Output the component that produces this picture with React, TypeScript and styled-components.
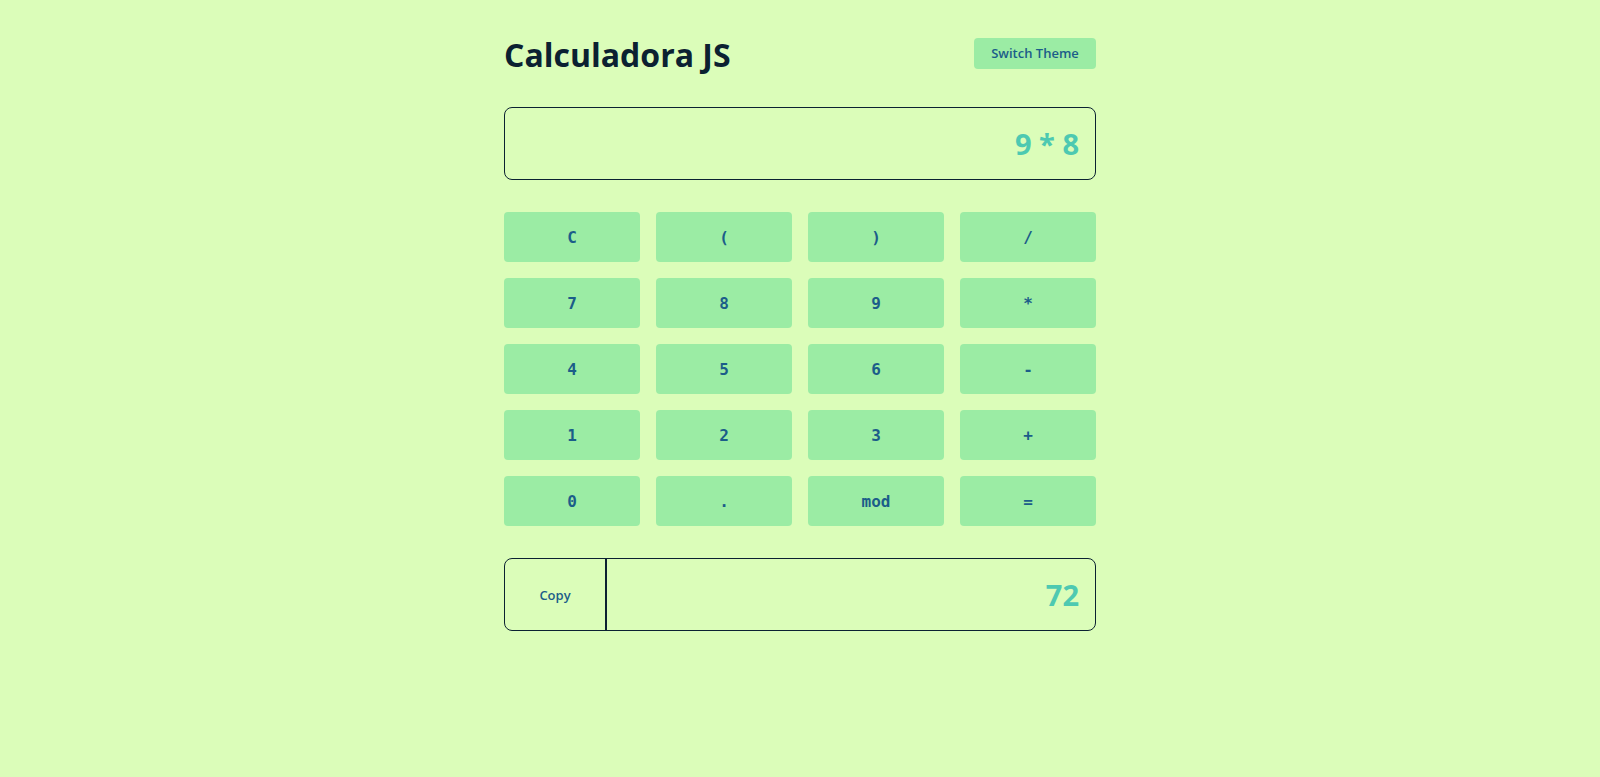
import React from "react";
import styled, { createGlobalStyle } from "styled-components";

const Global = createGlobalStyle`
  html, body { margin: 0; padding: 0; }
  body { background: #dbfdb9; font-family: "Open Sans", sans-serif; }
`;

const Page = styled.div`
  min-height: 777px;
  display: flex;
  justify-content: center;
`;

const Calc = styled.main`
  width: 592px;
  padding-top: 36px;
  display: flex;
  flex-direction: column;
`;

const Header = styled.header`
  display: flex;
  align-items: center;
  justify-content: space-between;
  height: 36px;
  margin-bottom: 35px;
`;

const Title = styled.h1`
  margin: 0;
  font-family: "Open Sans", sans-serif;
  font-weight: 700;
  font-size: 32px;
  color: #0b2131;
`;

const ThemeButton = styled.button`
  width: 122px;
  height: 31px;
  margin-top: -2px;
  border: none;
  border-radius: 4px;
  background: #9beca4;
  color: #1b5d89;
  font-family: "Open Sans", sans-serif;
  font-weight: 600;
  font-size: 13px;
  cursor: pointer;
`;

const Screen = styled.div`
  height: 73px;
  box-sizing: border-box;
  border: 1px solid #0b2131;
  border-radius: 8px;
  display: flex;
  align-items: center;
  justify-content: flex-end;
  padding: 0 16px;
  color: #4dc9b1;
  font-family: "Open Sans", sans-serif;
  font-weight: 700;
  font-size: 29px;
`;

const Keys = styled.div`
  margin: 32px 0;
  display: grid;
  grid-template-columns: repeat(4, 1fr);
  gap: 16px;
`;

const Key = styled.button`
  height: 50px;
  border: none;
  border-radius: 4px;
  background: #9beca4;
  color: #1b5d89;
  font-family: "DejaVu Sans Mono", monospace;
  font-weight: 700;
  font-size: 16px;
  cursor: pointer;
`;

const Result = styled.div`
  height: 73px;
  box-sizing: border-box;
  border: 1px solid #0b2131;
  border-radius: 8px;
  display: flex;
`;

const CopyButton = styled.button`
  width: 102px;
  border: none;
  border-right: 2px solid #0b2131;
  background: transparent;
  color: #1b5d89;
  font-family: "Open Sans", sans-serif;
  font-weight: 600;
  font-size: 13px;
  cursor: pointer;
`;

const Value = styled.div`
  flex: 1;
  display: flex;
  align-items: center;
  justify-content: flex-end;
  padding: 0 16px;
  color: #4dc9b1;
  font-family: "Open Sans", sans-serif;
  font-weight: 700;
  font-size: 29px;
`;

const keys = ["C", "(", ")", "/", "7", "8", "9", "*", "4", "5", "6", "-", "1", "2", "3", "+", "0", ".", "mod", "="];

export default function App() {
  return (
    <Page>
      <Global />
      <Calc>
        <Header>
          <Title>Calculadora JS</Title>
          <ThemeButton>Switch Theme</ThemeButton>
        </Header>
        <Screen>9 * 8</Screen>
        <Keys>
          {keys.map((k) => (
            <Key key={k}>{k}</Key>
          ))}
        </Keys>
        <Result>
          <CopyButton>Copy</CopyButton>
          <Value>72</Value>
        </Result>
      </Calc>
    </Page>
  );
}
